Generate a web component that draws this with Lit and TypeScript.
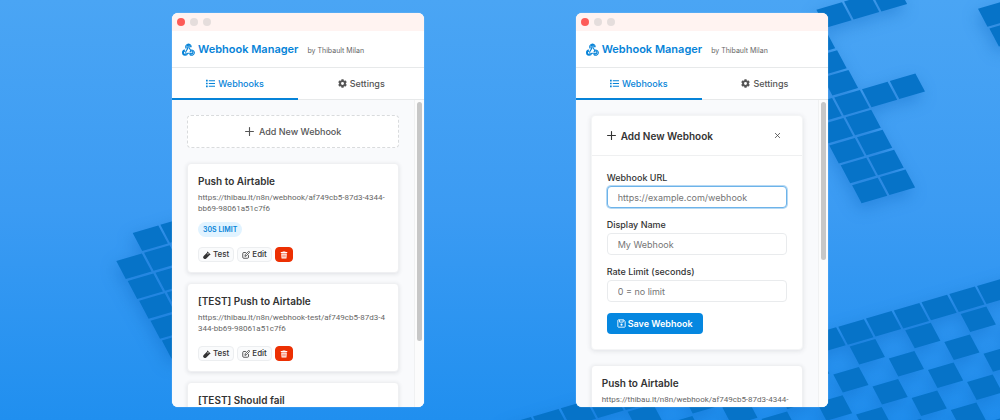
import { LitElement, html, css, svg, nothing } from "lit";
import { customElement, property } from "lit/decorators.js";

type Tile = [number, number];

const STEP_X = { x: 27.75, y: -8.15 };
const STEP_Y = { x: 11.4, y: 19.9 };

function tilePath(ox: number, oy: number, tiles: Tile[]) {
  return tiles
    .map(([i, j]) => {
      const x = ox + i * STEP_X.x + j * STEP_Y.x;
      const y = oy + i * STEP_X.y + j * STEP_Y.y;
      return `M${x.toFixed(1)} ${y.toFixed(1)}l25.6 -7.5 9.6 18 -25.7 7.5z`;
    })
    .join("");
}

const leftTiles: Tile[] = [
  [1, -1], [2, -1], [0, 0], [1, 0], [0, 1], [1, 1], [0, 2], [1, 2], [0, 3], [1, 3], [0, 4],
];
const topTiles: Tile[] = [
  [0, -4], [1, -4], [2, -4],
  [-1, -3], [-1, -2], [-1, -1], [-1, 0], [0, 0], [1, 0],
  [-1, 1], [-1, 2], [-1, 3], [-1, 4],
  [-2, 0], [-2, 1], [-2, 2], [-2, 3], [-2, 4],
  [5, -2], [6, -2], [5, -1], [6, -1],
];
const bottomTiles: Tile[] = [];
for (let i = -12; i <= 7; i++) {
  bottomTiles.push([i, 0]);
  for (let j = 1; j <= 6; j++) {
    if ((i + j) % 2 !== 0) bottomTiles.push([i, j]);
  }
}

const icons = {
  webhook: svg`<g fill="none" stroke="currentColor" stroke-width="1.3" stroke-linejoin="round" stroke-linecap="round">
    <path d="M4.900 6.400A3.400 3.400 0 1 1 11.300 4.700H9.800A1.800 1.800 0 1 0 7.200 6.300L4.300 11.300"/>
    <path d="M8 4.500 10.600 8.900A3.200 3.200 0 1 1 9.700 14.200L10.700 13.200A1.800 1.800 0 1 0 10 10.600"/>
    <path d="M3.400 8.700A3.200 3.200 0 1 0 7 12.500H12.300M3.300 10.200A1.800 1.800 0 1 0 5.300 12.500"/></g>`,
  list: svg`<path fill="currentColor" d="M0 1.500h3v3H0zM0 6.500h3v3H0zM0 11.500h3v3H0zM5 2.200h11v1.700H5zM5 7.200h11v1.700H5zM5 12.200h11v1.700H5z"/>`,
  gear: svg`<path fill="currentColor" fill-rule="evenodd" d="M6.200.3h3.600l.5 2.300 1.300.7 2.200-.7 1.800 3.100L14 7.200v1.600l1.600 1.500-1.800 3.100-2.200-.7-1.300.7-.5 2.300H6.200l-.5-2.300-1.300-.7-2.200.7-1.800-3.100L2 8.800V7.200L.4 5.700l1.800-3.100 2.200.7 1.300-.7zM8 5.400a2.600 2.600 0 1 0 0 5.200 2.600 2.600 0 0 0 0-5.200z"/>`,
  plus: svg`<path d="M8 1v14M1 8h14" fill="none" stroke="currentColor" stroke-width="2" stroke-linecap="round"/>`,
  test: svg`<path fill="currentColor" fill-rule="evenodd" d="M9 .8 15.200 7l-1.100 1.100-.6-.2-6.900 7a3.300 3.300 0 0 1-5.200-4.900L8.400 2.900l-.5-1zM9.700 4.300 7.700 6.300h3.200l1-1z"/>`,
  edit: svg`<path fill="none" stroke="currentColor" stroke-width="1.600" stroke-linecap="round" stroke-linejoin="round" d="M7 3H3.500A2 2 0 0 0 1.500 5v7.500a2 2 0 0 0 2 2H11a2 2 0 0 0 2-2V9M6 10l.6-2.800L12.500 1.300a1.400 1.400 0 0 1 2.200 2.200L8.800 9.400z"/>`,
  trash: svg`<path fill="currentColor" fill-rule="evenodd" d="M5.500 1h5l.6 1.200H14.500V4h-13V2.200h3.400zM2.500 5h11l-.6 10h-9.800zM5.300 7v6h1V7zM7.500 7v6h1V7zM9.700 7v6h1V7z"/>`,
  save: svg`<path fill="none" stroke="currentColor" stroke-width="1.600" stroke-linejoin="round" d="M2.500 1.500h9.200l2.800 2.800v9.200a1 1 0 0 1-1 1h-11a1 1 0 0 1-1-1v-11a1 1 0 0 1 1-1zM4.500 1.500v4h6.500v-4"/><circle cx="8" cy="10" r="1.900" fill="currentColor"/>`,
  close: svg`<path d="M3 3l10 10M13 3L3 13" fill="none" stroke="currentColor" stroke-width="1.800" stroke-linecap="round"/>`,
};

function icon(name: keyof typeof icons) {
  return html`<svg class="icon" viewBox="0 0 16 16" aria-hidden="true">${icons[name]}</svg>`;
}

interface Webhook {
  name: string;
  url: string;
  limit?: string;
}

const webhooks: Webhook[] = [
  { name: "Push to Airtable", url: "https://thibau.lt/n8n/webhook/af749cb5-87d3-4344-bb69-98061a51c7f6", limit: "30s limit" },
  { name: "[TEST] Push to Airtable", url: "https://thibau.lt/n8n/webhook-test/af749cb5-87d3-4344-bb69-98061a51c7f6" },
  { name: "[TEST] Should fail", url: "" },
];

const shared = css`
  * { box-sizing: border-box; }
  button, input { font: inherit; margin: 0; }
  .icon { width: 1em; height: 1em; flex: none; display: block; }
`;

@customElement("webhook-card")
class WebhookCard extends LitElement {
  @property({ attribute: false }) hook!: Webhook;

  static styles = [shared, css`
    :host {
      display: block;
      background: #fff;
      border: 1px solid #eff0f2;
      border-radius: 4px;
      box-shadow: 0 1px 4px rgba(30, 40, 60, 0.12);
      padding: 9px 10px 10px;
    }
    h2 { margin: 0; font-size: 10px; line-height: 16px; font-weight: 600; color: #333; }
    .url {
      margin: 3px 0 0;
      padding-right: 3px;
      font-family: Roboto, sans-serif;
      font-size: 8px;
      line-height: 11px;
      color: #666;
      word-break: break-all;
    }
    .badge {
      display: block;
      margin-top: 8px;
      padding: 0 5px;
      border-radius: 8px;
      background: #e1f3ff;
      color: #0683d8;
      font-size: 7px;
      line-height: 15px;
      font-weight: 600;
      text-transform: uppercase;
    }
    .meta { display: flex; }
    .actions { display: flex; gap: 3px; margin-top: 10px; }
    .url + .actions { margin-top: 12px; }
    button {
      display: flex;
      align-items: center;
      gap: 2px;
      height: 15px;
      padding: 0 4px;
      border: 1px solid #eceef0;
      border-radius: 4px;
      background: #fafbfc;
      color: #333;
      font-size: 8px;
      line-height: 11px;
      font-weight: 500;
    }
    .danger { background: #ec3003; border-color: #ec3003; color: #fff; }
  `];

  render() {
    const { name, url, limit } = this.hook;
    return html`
      <h2>${name}</h2>
      ${url ? html`<p class="url">${url}</p>` : nothing}
      ${limit ? html`<div class="meta"><span class="badge">${limit}</span></div>` : nothing}
      <div class="actions">
        <button>${icon("test")}Test</button>
        <button>${icon("edit")}Edit</button>
        <button class="danger" aria-label="Delete">${icon("trash")}</button>
      </div>
    `;
  }
}

@customElement("webhook-form")
class WebhookForm extends LitElement {
  static styles = [shared, css`
    :host {
      display: block;
      background: #fff;
      border: 1px solid #f4f5f6;
      border-radius: 4px;
      box-shadow: 0 1px 5px rgba(30, 40, 60, 0.12);
    }
    header {
      display: flex;
      align-items: center;
      gap: 5px;
      height: 40px;
      padding: 0 21px 0 15px;
      border-bottom: 1px solid #eff0f1;
      font-size: 9px;
      color: #333;
    }
    h2 { flex: 1; margin: 0; font-size: 10px; line-height: 16px; font-weight: 600; }
    .close { padding: 0; border: 0; background: none; color: #444; font-size: 7px; }
    form { padding: 14px 15px 15px; }
    label { display: block; font-size: 9px; line-height: 16px; font-weight: 500; color: #333; }
    input {
      display: block;
      width: 100%;
      height: 22px;
      margin: 0 0 9px;
      padding: 0 10px;
      border: 1px solid #e9ebed;
      border-radius: 4px;
      background: #fff;
      font-size: 9px;
      color: #333;
      outline: none;
    }
    input::placeholder { color: #757575; opacity: 1; }
    .active { border-color: #6db3e9; box-shadow: 0 0 0 1px rgba(109, 179, 233, 0.5); }
    .save {
      display: flex;
      align-items: center;
      gap: 2px;
      height: 21px;
      margin-top: 11px;
      padding: 0 10px;
      border: 0;
      border-radius: 4px;
      background: #0587e0;
      color: #fff;
      font-size: 9px;
      font-weight: 600;
    }
  `];

  render() {
    return html`
      <header>
        ${icon("plus")}
        <h2>Add New Webhook</h2>
        <button class="close" aria-label="Close">${icon("close")}</button>
      </header>
      <form>
        <label for="url">Webhook URL</label>
        <input id="url" class="active" type="text" placeholder="https://example.com/webhook" />
        <label for="name">Display Name</label>
        <input id="name" type="text" placeholder="My Webhook" />
        <label for="limit">Rate Limit (seconds)</label>
        <input id="limit" type="text" placeholder="0 = no limit" />
        <button class="save" type="button">${icon("save")}Save Webhook</button>
      </form>
    `;
  }
}

@customElement("webhook-window")
class WebhookWindow extends LitElement {
  @property({ type: Boolean }) adding = false;

  static styles = [shared, css`
    :host {
      display: flex;
      flex-direction: column;
      min-width: 0;
      min-height: 0;
      overflow: hidden;
      border-radius: 6px;
      background: #fff;
      box-shadow: 0 0 1px rgba(255, 255, 255, 0.8);
    }
    .titlebar { display: flex; align-items: center; gap: 5px; height: 18px; flex: none; padding: 0 5px; background: #fff3f1; }
    .dot { width: 8px; height: 8px; border-radius: 50%; background: #e5dddc; }
    .dot.close { background: #fd5b58; }
    .brand {
      display: flex;
      align-items: center;
      height: 37px;
      flex: none;
      padding: 0 10px;
      border-bottom: 1px solid #e7e9ea;
      color: #0683d8;
    }
    .brand .icon { width: 13px; height: 13px; margin-right: 3px; }
    h1 { margin: 0; font-size: 11px; line-height: 16px; font-weight: 600; }
    .author { margin-left: 9px; padding-top: 3px; font-size: 7px; line-height: 10px; color: #666; }
    .tabs { display: flex; height: 32px; flex: none; border-bottom: 1px solid #e7e9ea; }
    .tab {
      flex: 1;
      display: flex;
      align-items: center;
      justify-content: center;
      gap: 3px;
      margin-bottom: -1px;
      padding: 0;
      border: 0;
      border-bottom: 2px solid transparent;
      background: none;
      color: #555;
      font-size: 9px;
      font-weight: 500;
    }
    .tab.selected { border-color: #0683d8; color: #0683d8; }
    .view { flex: 1; min-height: 0; display: flex; background: #f9fafc; }
    .list {
      flex: 1;
      min-width: 0;
      overflow: hidden;
      display: flex;
      flex-direction: column;
      gap: 10px;
      padding: 15px;
    }
    .list > * { flex: none; }
    .gap { gap: 15px; }
    .add {
      display: flex;
      align-items: center;
      justify-content: center;
      gap: 5px;
      height: 33px;
      margin-bottom: 5px;
      border: 1px dashed #d9dbdd;
      border-radius: 4px;
      background: #fff;
      color: #555;
      font-size: 9px;
      font-weight: 500;
    }
    .track { width: 10px; flex: none; padding: 2px; background: #fcfcfc; border-left: 1px solid #f0f1f2; }
    .thumb { width: 5px; margin-left: auto; height: 79%; border-radius: 3px; background: #c7c7c7; }
    .thumb.short { height: 52%; }
  `];

  render() {
    return html`
      <div class="titlebar"><i class="dot close"></i><i class="dot"></i><i class="dot"></i></div>
      <div class="brand">${icon("webhook")}<h1>Webhook Manager</h1><span class="author">by Thibault Milan</span></div>
      <nav class="tabs">
        <button class="tab selected">${icon("list")}Webhooks</button>
        <button class="tab">${icon("gear")}Settings</button>
      </nav>
      <div class="view">
        <div class="list ${this.adding ? "gap" : ""}">
          ${this.adding
            ? html`<webhook-form></webhook-form>`
            : html`<button class="add">${icon("plus")}Add New Webhook</button>`}
          ${(this.adding ? webhooks.slice(0, 1) : webhooks).map((hook) => html`<webhook-card .hook=${hook}></webhook-card>`)}
        </div>
        <div class="track"><div class="thumb ${this.adding ? "short" : ""}"></div></div>
      </div>
    `;
  }
}

@customElement("app-root")
class AppRoot extends LitElement {
  static styles = css`
    :host {
      display: block;
      position: relative;
      height: 100vh;
      overflow: hidden;
      font-family: Inter, "Liberation Sans", sans-serif;
      background: linear-gradient(#4aa5f4, #3b9bf3 50%, #208fef);
    }
    .backdrop { position: absolute; inset: 0; width: 100%; height: 100%; }
    .tiles { fill: #0673c8; filter: drop-shadow(-2px 6px 8px rgba(10, 100, 190, 0.4)); }
    .stage {
      box-sizing: border-box;
      position: relative;
      height: 100%;
      display: grid;
      grid-template-columns: 5fr 3fr 5fr;
      grid-template-rows: minmax(0, 1fr);
      padding: 13px 17.2%;
    }
    .right { grid-column: 3; }
  `;

  render() {
    return html`
      <svg class="backdrop" viewBox="0 0 1000 420" preserveAspectRatio="xMidYMid slice" aria-hidden="true">
        <g class="tiles">
          <path d=${tilePath(116.3, 261, leftTiles)} />
          <path d=${tilePath(862, 89.3, topTiles)} />
          <path d=${tilePath(838.3, 326.7, bottomTiles)} />
        </g>
      </svg>
      <main class="stage">
        <webhook-window></webhook-window>
        <webhook-window class="right" adding></webhook-window>
      </main>
    `;
  }
}
